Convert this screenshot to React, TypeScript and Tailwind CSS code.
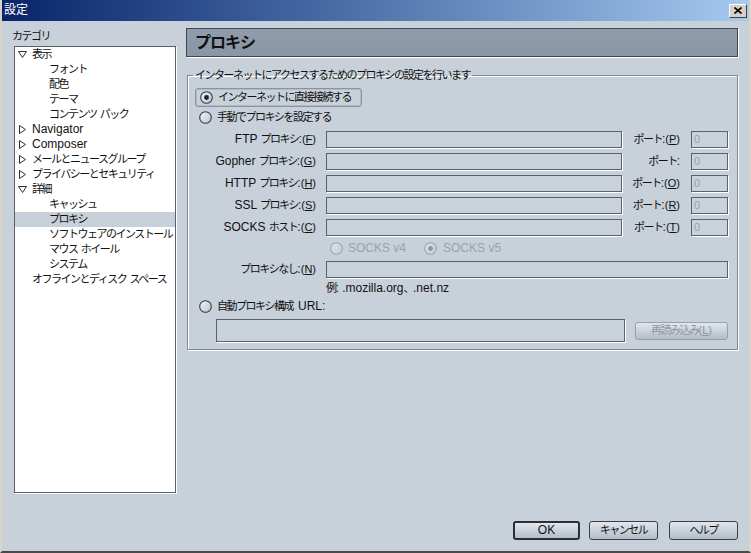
import React from "react";

const JP = /([\u3000-\u30ff\u4e00-\u9fff\uff00-\uffef]+)/;

// split mixed strings so kana/kanji get the narrower tracking
function T({ s }: { s: string }) {
  const parts = s.split(JP).filter((p) => p !== "");
  return (
    <>
      {parts.map((p, i) =>
        JP.test(p) ? (
          <span key={i} className="text-[11px] tracking-[-1.5px]">
            {p}
          </span>
        ) : (
          <span key={i}>{p}</span>
        ),
      )}
    </>
  );
}

function Key({ label, k }: { label: string; k?: string }) {
  return (
    <span className="whitespace-nowrap">
      <T s={label} />
      {k && (
        <span className="text-[11px]">
          (<span className="underline">{k}</span>)
        </span>
      )}
    </span>
  );
}

function Radio({ checked, disabled }: { checked?: boolean; disabled?: boolean }) {
  const stroke = disabled ? "#9aa3ad" : "#353b43";
  return (
    <svg width="13" height="13" viewBox="0 0 13 13" className="shrink-0">
      <defs>
        <linearGradient id={disabled ? "rgd" : "rg"} x1="0" y1="0" x2="1" y2="1">
          <stop offset="0" stopColor={disabled ? "#dfe4e9" : "#f4f7fa"} />
          <stop offset="1" stopColor={disabled ? "#c4ccd5" : "#b9c3ce"} />
        </linearGradient>
      </defs>
      <circle cx="6.5" cy="6.5" r="5.8" fill={`url(#${disabled ? "rgd" : "rg"})`} stroke={stroke} strokeWidth="1.1" />
      {checked && <circle cx="6.5" cy="6.5" r="2.4" fill={disabled ? "#8d96a0" : "#1f2328"} />}
    </svg>
  );
}

function Field({ className = "", value }: { className?: string; value?: string }) {
  return (
    <div
      className={`h-[17px] border border-[#59616c] bg-[#c9d1da] shadow-[1px_1px_0_#ffffff] pl-[2px] text-[11px] leading-[15px] text-[#9aa2ac] ${className}`}
    >
      {value}
    </div>
  );
}

function Twisty({ open }: { open: boolean }) {
  return (
    <svg width="9" height="9" viewBox="0 0 9 9" className="shrink-0">
      {open ? (
        <polygon points="0.5,1.5 8.5,1.5 4.5,7.5" fill="#ffffff" stroke="#2a2f35" strokeWidth="1" />
      ) : (
        <polygon points="1.5,0.5 7.5,4.5 1.5,8.5" fill="#ffffff" stroke="#2a2f35" strokeWidth="1" />
      )}
    </svg>
  );
}

const tree: { t: string; tw?: "open" | "closed"; child?: boolean; sel?: boolean }[] = [
  { t: "表示", tw: "open" },
  { t: "フォント", child: true },
  { t: "配色", child: true },
  { t: "テーマ", child: true },
  { t: "コンテンツ パック", child: true },
  { t: "Navigator", tw: "closed" },
  { t: "Composer", tw: "closed" },
  { t: "メールとニュースグループ", tw: "closed" },
  { t: "プライバシーとセキュリティ", tw: "closed" },
  { t: "詳細", tw: "open" },
  { t: "キャッシュ", child: true },
  { t: "プロキシ", child: true, sel: true },
  { t: "ソフトウェアのインストール", child: true },
  { t: "マウス ホイール", child: true },
  { t: "システム", child: true },
  { t: "オフラインとディスク スペース" },
];

const proxyRows = [
  { label: "FTP プロキシ:", k: "F", port: "ポート:", pk: "P" },
  { label: "Gopher プロキシ:", k: "G", port: "ポート:" },
  { label: "HTTP プロキシ:", k: "H", port: "ポート:", pk: "O" },
  { label: "SSL プロキシ:", k: "S", port: "ポート:", pk: "R" },
  { label: "SOCKS ホスト:", k: "C", port: "ポート:", pk: "T" },
];

function Button({ children, def, disabled, className = "" }: { children: React.ReactNode; def?: boolean; disabled?: boolean; className?: string }) {
  return (
    <div
      className={`h-[18px] flex items-center justify-center rounded-[3px] bg-gradient-to-b from-[#e2e7ec] to-[#b3bdc8] ${
        def ? "border-2 border-[#2a2f36]" : disabled ? "border border-[#98a1ab] text-[#8e97a1]" : "border border-[#3a4048]"
      } ${className}`}
    >
      {children}
    </div>
  );
}

export default function App() {
  return (
    <div
      className="w-[751px] h-[553px] flex flex-col bg-[#c8d0d9] border-l-2 border-r-2 border-b-2 border-l-[#d9d4c9] border-r-[#d9d4c9] border-b-[#4a4a48] text-[12px] leading-[15px] text-[#111]"
      style={{ fontFamily: '"Liberation Sans", "Noto Sans CJK JP", sans-serif' }}
    >
      {/* title bar */}
      <div className="h-[21px] shrink-0 flex items-center justify-between bg-gradient-to-r from-[#0a246a] to-[#a6caf0] pl-[2px] pr-[2px]">
        <span className="text-white text-[12px]">設定</span>
        <div className="w-[18px] h-[14px] bg-[#d4d0c8] border border-t-white border-l-white border-r-[#404040] border-b-[#404040] flex items-center justify-center">
          <svg width="8" height="7" viewBox="0 0 8 7">
            <path d="M0.5 0.5 L7.5 6.5 M7.5 0.5 L0.5 6.5" stroke="#000" strokeWidth="1.6" />
          </svg>
        </div>
      </div>

      <div className="flex flex-1">
        {/* categories */}
        <div className="w-[174px] shrink-0 pl-[10px] pt-[8px] flex flex-col">
          <div className="h-[15px]">
            <T s="カテゴリ" />
          </div>
          <div className="mt-[2px] ml-[2px] w-[162px] h-[447px] bg-white border border-[#5a606b] shadow-[1px_1px_0_#ffffff]">
            {tree.map((n) => (
              <div key={n.t} className={`h-[15px] flex items-center whitespace-nowrap ${n.sel ? "bg-[#c8d0d9]" : ""}`}>
                {n.child ? (
                  <span className="pl-[34px]">
                    <T s={n.t} />
                  </span>
                ) : n.tw ? (
                  <>
                    <span className="ml-[3px]">
                      <Twisty open={n.tw === "open"} />
                    </span>
                    <span className="ml-[5px]">
                      <T s={n.t} />
                    </span>
                  </>
                ) : (
                  <span className="pl-[17px]">
                    <T s={n.t} />
                  </span>
                )}
              </div>
            ))}
          </div>
        </div>

        {/* right side */}
        <div className="w-[552px] ml-[10px] pt-[7px] flex flex-col">
          <div className="h-[29px] border border-[#3e4652] bg-gradient-to-b from-[#909cab] to-[#8896a5] shadow-[1px_1px_0_#ffffff] flex items-center pl-[8px] text-[16px] font-bold">
            <span className="tracking-[-1px]">プロキシ</span>
          </div>

          <fieldset className="mt-[11px] ml-[1px] w-[551px] border border-[#7f8893] shadow-[inset_1px_1px_0_#ffffff,1px_1px_0_#ffffff] pb-[7px] pr-[9px]">
            <legend className="ml-[5px] px-[2px] leading-[15px]">
              <T s="インターネットにアクセスするためのプロキシの設定を行います" />
            </legend>

            <div className="mt-[5px] ml-[7px] w-[167px] h-[19px] rounded-[3px] border border-[#8a939e] shadow-[inset_0_0_0_1px_#b3bcc6] flex items-center pl-[4px] gap-[5px]">
              <Radio checked />
              <T s="インターネットに直接接続する" />
            </div>

            <div className="mt-[3px] ml-[11px] h-[15px] flex items-center gap-[5px]">
              <Radio />
              <T s="手動でプロキシを設定する" />
            </div>

            <div className="mt-[6px] flex flex-col gap-[5px]">
              {proxyRows.map((r) => (
                <div key={r.k} className="h-[17px] flex items-center">
                  <div className="w-[128px] shrink-0 text-right">
                    <Key label={r.label} k={r.k} />
                  </div>
                  <Field className="ml-[10px] flex-1" />
                  <div className="ml-[10px] w-[48px] text-right shrink-0">
                    <Key label={r.port} k={r.pk} />
                  </div>
                  <Field className="ml-[11px] w-[37px] shrink-0" value="0" />
                </div>
              ))}
            </div>

            <div className="mt-[5px] ml-[142px] h-[14px] flex items-center text-[#9aa3ad]">
              <Radio disabled />
              <span className="ml-[5px]">SOCKS v4</span>
              <span className="ml-[18px]">
                <Radio checked disabled />
              </span>
              <span className="ml-[6px]">SOCKS v5</span>
            </div>

            <div className="mt-[6px] h-[17px] flex items-center">
              <div className="w-[128px] shrink-0 text-right">
                <Key label="プロキシなし:" k="N" />
              </div>
              <Field className="ml-[10px] flex-1" />
            </div>

            <div className="mt-[3px] ml-[138px] h-[14px] flex items-center">
              <T s="例: .mozilla.org、.net.nz" />
            </div>

            <div className="mt-[4px] ml-[11px] h-[15px] flex items-center gap-[5px]">
              <Radio />
              <T s="自動プロキシ構成 URL:" />
            </div>

            <div className="mt-[5px] ml-[28px] flex items-center">
              <Field className="h-[23px] w-[409px]" />
              <Button disabled className="ml-[10px] w-[93px]">
                <Key label="再読み込み" k="L" />
              </Button>
            </div>
          </fieldset>
        </div>
      </div>

      {/* dialog buttons */}
      <div className="h-[58px] shrink-0 flex justify-end items-start pt-[28px] pr-[11px]">
        <Button def className="w-[67px] h-[19px]">
          <span>OK</span>
        </Button>
        <Button className="ml-[9px] w-[69px] h-[19px]">
          <T s="キャンセル" />
        </Button>
        <Button className="ml-[11px] w-[69px] h-[19px]">
          <T s="ヘルプ" />
        </Button>
      </div>
    </div>
  );
}
